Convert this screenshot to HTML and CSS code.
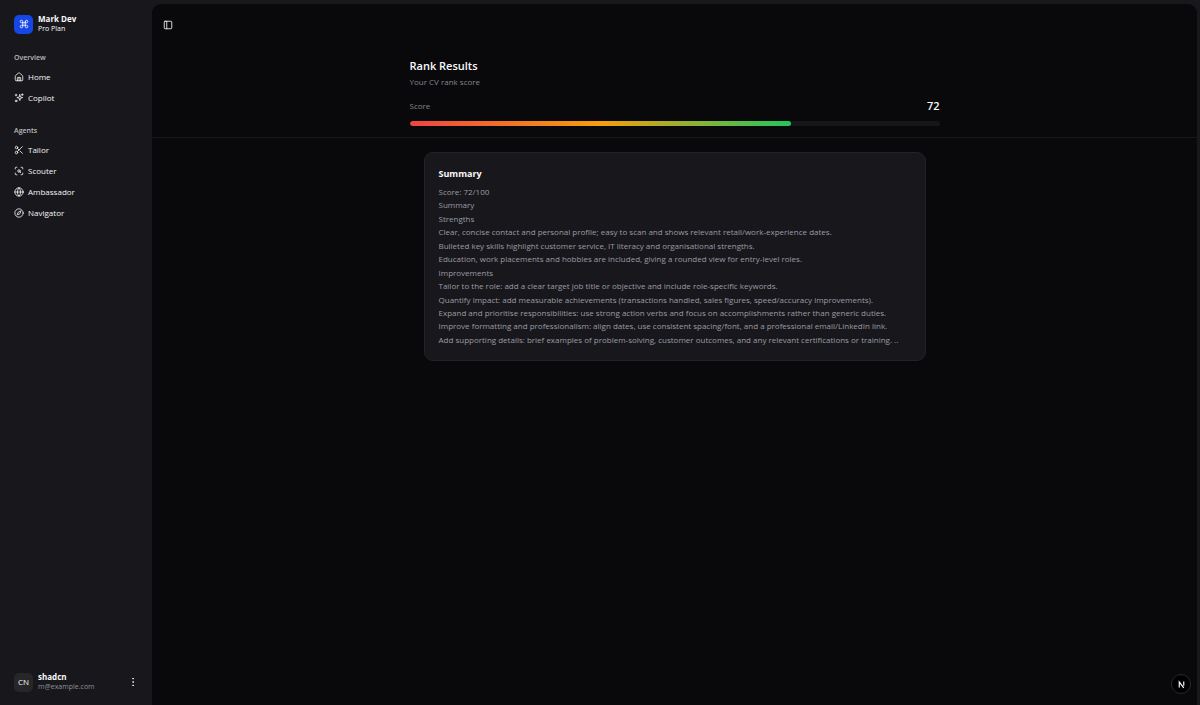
FILE: index.html
```html
<!DOCTYPE html>
<html lang="en">
<head>
<meta charset="utf-8">
<meta name="viewport" content="width=device-width, initial-scale=1">
<title>Rank Results</title>
<link rel="stylesheet" href="styles.css">
</head>
<body>
<div class="app">
  <aside class="sidebar">
    <div class="profile">
      <span class="brand-tile">
        <svg class="icon" viewBox="0 0 24 24"><path d="M15 6v12a3 3 0 1 0 3-3H6a3 3 0 1 0 3 3V6a3 3 0 1 0-3 3h12a3 3 0 1 0-3-3"/></svg>
      </span>
      <div class="profile-text">
        <strong class="profile-name">Mark Dev</strong>
        <span class="profile-note">Pro Plan</span>
      </div>
    </div>
    <nav class="nav">
      <section class="nav-group">
        <h2 class="nav-title">Overview</h2>
        <a class="nav-link" href="#home"><svg class="icon" viewBox="0 0 24 24"><path d="M16 21v-7a1 1 0 0 0-1-1H9a1 1 0 0 0-1 1v7"/><path d="M12 13v8"/><path d="M3 10a2 2 0 0 1 .7-1.500l7-6a2 2 0 0 1 2.600 0l7 6A2 2 0 0 1 21 10v9a2 2 0 0 1-2 2H5a2 2 0 0 1-2-2z"/></svg>Home</a>
        <a class="nav-link" href="#copilot"><svg class="icon" viewBox="0 0 24 24"><path d="M14 4l1.500 5.500L21 11l-5.500 1.500L14 18l-1.500-5.500L7 11l5.500-1.500z"/><path d="M20 2v4M22 4h-4M5 3v4M7 5H3"/><circle cx="5" cy="19" r="2"/></svg>Copilot</a>
      </section>
      <section class="nav-group">
        <h2 class="nav-title">Agents</h2>
        <a class="nav-link" href="#tailor"><svg class="icon" viewBox="0 0 24 24"><circle cx="6" cy="6" r="3"/><path d="M8.120 8.120 12 12M20 4 8.120 15.880"/><circle cx="6" cy="18" r="3"/><path d="M14.800 14.800 20 20"/></svg>Tailor</a>
        <a class="nav-link" href="#scouter"><svg class="icon" viewBox="0 0 24 24"><path d="M3 7V5a2 2 0 0 1 2-2h2M17 3h2a2 2 0 0 1 2 2v2M21 17v2a2 2 0 0 1-2 2h-2M7 21H5a2 2 0 0 1-2-2v-2"/><circle cx="12" cy="12" r="3"/><path d="m16 16-1.900-1.900"/></svg>Scouter</a>
        <a class="nav-link" href="#ambassador"><svg class="icon" viewBox="0 0 24 24"><circle cx="12" cy="12" r="10"/><path d="M12 2a14.500 14.500 0 0 0 0 20 14.500 14.500 0 0 0 0-20M2 12h20"/></svg>Ambassador</a>
        <a class="nav-link" href="#navigator"><svg class="icon" viewBox="0 0 24 24"><circle cx="12" cy="12" r="10"/><path d="m16.240 7.760-1.800 5.410a2 2 0 0 1-1.270 1.270L7.760 16.240l1.800-5.410a2 2 0 0 1 1.270-1.270z"/></svg>Navigator</a>
      </section>
    </nav>
    <div class="profile account">
      <span class="avatar">CN</span>
      <div class="profile-text">
        <strong class="profile-name">shadcn</strong>
        <span class="profile-note muted">m@example.com</span>
      </div>
      <button class="icon-button" type="button" aria-label="Account menu"><svg class="icon" viewBox="0 0 24 24"><circle cx="12" cy="12" r="1"/><circle cx="12" cy="4" r="1"/><circle cx="12" cy="20" r="1"/></svg></button>
    </div>
  </aside>
  <main class="panel">
    <div class="toolbar">
      <button class="icon-button" type="button" aria-label="Toggle sidebar"><svg class="icon" viewBox="0 0 24 24"><rect x="3" y="3" width="18" height="18" rx="2"/><path d="M9 3v18"/></svg></button>
    </div>
    <header class="rank">
      <div class="container">
        <h1 class="rank-title">Rank Results</h1>
        <p class="rank-note">Your CV rank score</p>
        <div class="score-row"><span class="score-label">Score</span><strong class="score-value">72</strong></div>
        <div class="meter" role="progressbar" aria-label="Score" aria-valuemin="0" aria-valuemax="100" aria-valuenow="72"><div class="meter-fill" style="width: 72%"></div></div>
      </div>
    </header>
    <div class="container body">
      <article class="card">
        <h2 class="card-title">Summary</h2>
        <div class="card-text">
          <p>Score: 72/100</p>
          <p>Summary</p>
          <p>Strengths</p>
          <p>Clear, concise contact and personal profile; easy to scan and shows relevant retail/work-experience dates.</p>
          <p>Bulleted key skills highlight customer service, IT literacy and organisational strengths.</p>
          <p>Education, work placements and hobbies are included, giving a rounded view for entry-level roles.</p>
          <p>Improvements</p>
          <p>Tailor to the role: add a clear target job title or objective and include role-specific keywords.</p>
          <p>Quantify impact: add measurable achievements (transactions handled, sales figures, speed/accuracy improvements).</p>
          <p>Expand and prioritise responsibilities: use strong action verbs and focus on accomplishments rather than generic duties.</p>
          <p>Improve formatting and professionalism: align dates, use consistent spacing/font, and a professional email/LinkedIn link.</p>
          <p>Add supporting details: brief examples of problem-solving, customer outcomes, and any relevant certifications or training. ..</p>
        </div>
      </article>
    </div>
  </main>
</div>
<button class="dev-badge" type="button" aria-label="Developer tools"><svg class="dev-mark" viewBox="0 0 24 24"><path d="M6 20V5L18 21"/><path d="M18 4v11"/></svg></button>
</body>
</html>
```
FILE: styles.css
```css
* { box-sizing: border-box; }

body {
  margin: 0;
  background: #18181c;
  color: #fafafa;
  font-family: "Open Sans", "Noto Sans", sans-serif;
  font-size: 8px;
  line-height: 1.68;
}

h1, h2, p { margin: 0; }
button { padding: 0; border: 0; background: none; color: inherit; font: inherit; cursor: pointer; }

.icon {
  width: 10px;
  height: 10px;
  flex: none;
  fill: none;
  stroke: currentColor;
  stroke-width: 2;
  stroke-linecap: round;
  stroke-linejoin: round;
}

.app { display: flex; min-height: 100vh; }

.sidebar {
  display: flex;
  flex-direction: column;
  flex: none;
  width: 152px;
  padding: 14px 14px 13px;
}

.profile { display: flex; align-items: center; gap: 5px; }
.brand-tile, .avatar {
  display: grid;
  place-items: center;
  flex: none;
  width: 19px;
  height: 19px;
  border-radius: 5px;
}
.brand-tile { background: #1447e6; }
.avatar { background: #27272a; }
.profile-text { display: grid; flex: 1; line-height: 10px; }
.profile-name { font-weight: 700; }
.profile-note { font-size: 7px; }
.muted { color: #8e8e98; }

.nav { display: flex; flex-direction: column; gap: 14px; flex: 1; padding-top: 15px; }
.nav-title { font-size: 7px; line-height: 17px; font-weight: 600; color: #b8b8bd; }
.nav-link {
  display: flex;
  align-items: center;
  gap: 4px;
  height: 21px;
  color: #f4f4f5;
  text-decoration: none;
}

.icon-button { display: grid; place-items: center; width: 10px; height: 20px; }

.panel {
  flex: 1;
  min-width: 0;
  margin: 4px 3px 0 0;
  border-radius: 9px 9px 0 0;
  background: #09090b;
}
.toolbar { padding: 11px; }
.container { width: 100%; max-width: 530px; margin: 0 auto; }

.rank { padding: 12px 0 11px; border-bottom: 1px solid #18181b; }
.rank-title { font-size: 11px; line-height: 16px; font-weight: 600; }
.rank-note { margin-top: 1px; line-height: 14px; }
.rank-note, .score-label { color: #85858f; }
.score-row { display: flex; align-items: center; justify-content: space-between; margin-top: 9px; line-height: 16px; }
.score-value { font-size: 11px; font-weight: 600; }
.meter { height: 5px; margin-top: 7px; border-radius: 3px; background: #161618; overflow: hidden; }
.meter-fill { height: 100%; border-radius: 3px; background: linear-gradient(90deg, #ef4444, #f59e0b 50%, #22c55e); }

.body { padding: 14px; }
.card { padding: 14px; border: 1px solid #232327; border-radius: 9px; background: #18181c; }
.card-title { font-size: 9px; line-height: 14px; font-weight: 700; }
.card-text { margin-top: 4px; color: #9b9ba5; }

.dev-badge {
  position: fixed;
  right: 9px;
  bottom: 11px;
  display: grid;
  place-items: center;
  width: 20px;
  height: 20px;
  border: 1px solid #29292b;
  border-radius: 50%;
  background: #000;
}
.dev-mark { width: 9px; height: 9px; fill: none; stroke: #fff; stroke-width: 3; }
```
